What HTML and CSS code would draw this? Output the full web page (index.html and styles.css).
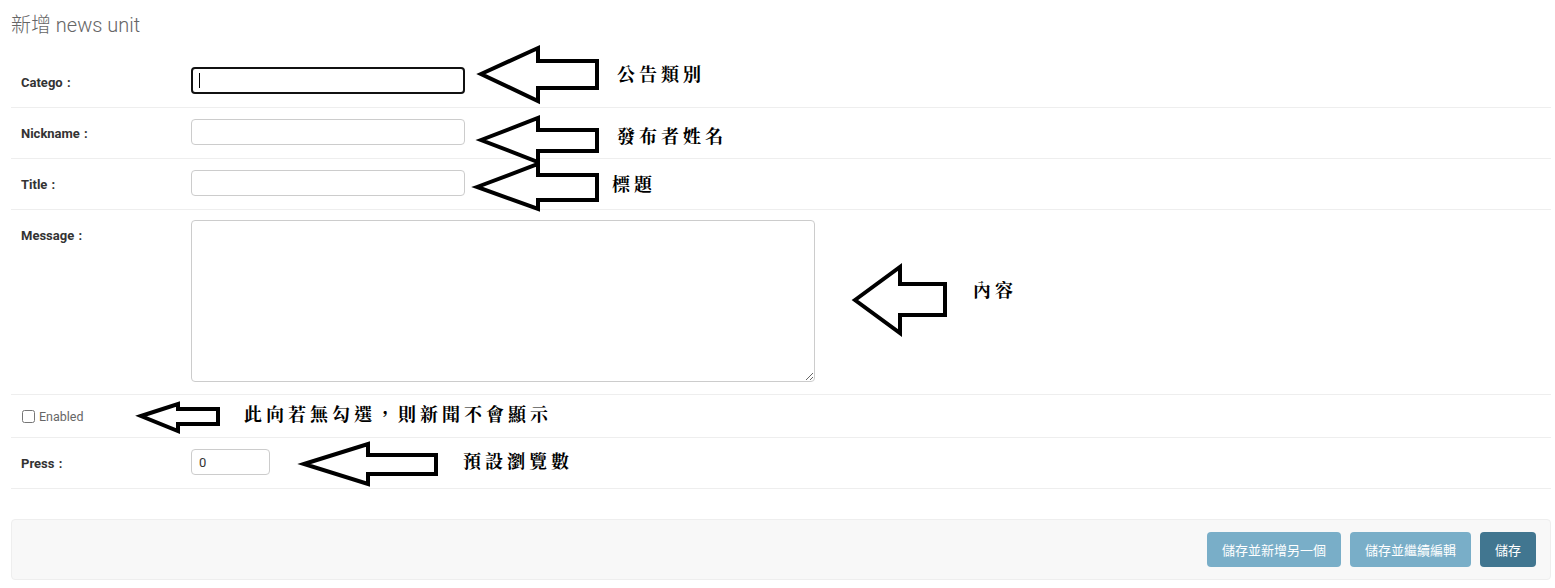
FILE: index.html
```html
<!DOCTYPE html>
<html lang="zh-Hant">
<head>
<meta charset="utf-8">
<title>新增 news unit</title>
<link rel="stylesheet" href="styles.css">
</head>
<body>
<div class="page">
  <h1 class="title">新增 news unit</h1>
  <form class="form">
    <div class="form-row">
      <label class="field-label required">Catego :</label>
      <div class="field"><span class="input-wrap focused"><input class="text-input focused-input" type="text"></span></div>
    </div>
    <div class="form-row">
      <label class="field-label required">Nickname :</label>
      <div class="field"><input class="text-input" type="text"></div>
    </div>
    <div class="form-row">
      <label class="field-label required">Title :</label>
      <div class="field"><input class="text-input" type="text"></div>
    </div>
    <div class="form-row">
      <label class="field-label required">Message :</label>
      <div class="field field-tall"><textarea class="textarea"></textarea></div>
    </div>
    <div class="form-row checkbox-row">
      <input class="checkbox" type="checkbox" id="enabled">
      <label class="checkbox-label" for="enabled">Enabled</label>
    </div>
    <div class="form-row">
      <label class="field-label required">Press :</label>
      <div class="field"><input class="text-input small-input" type="text" value="0"></div>
    </div>
    <div class="submit-row">
      <button type="button" class="btn">儲存並新增另一個</button>
      <button type="button" class="btn">儲存並繼續編輯</button>
      <button type="button" class="btn btn-default">儲存</button>
    </div>
  </form>
</div>

<div class="annotations">
  <svg class="arrows" width="1555" height="588" viewBox="0 0 1555 588" xmlns="http://www.w3.org/2000/svg">
    <g fill="#fff" stroke="#000" stroke-width="4" stroke-linejoin="miter">
      <polygon points="481,74 538,48 538,61 597,61 597,88 538,88 538,101"/>
      <polygon points="481,140 538,118 538,130 597,130 597,151 538,151 538,162"/>
      <polygon points="477,187 538,164 538,175 597,175 597,200 538,200 538,209"/>
      <polygon points="855,300 900,267 900,284 945,284 945,315 900,315 900,333"/>
      <polygon points="141,416 178,404 178,409 218,409 218,424 178,424 178,431"/>
      <polygon points="304,464 368,444 368,455 436,455 436,474 368,474 368,484"/>
    </g>
  </svg>
  <span class="note" style="left:617px;top:63px">公告類別</span>
  <span class="note" style="left:617px;top:125px">發布者姓名</span>
  <span class="note" style="left:612px;top:173px">標題</span>
  <span class="note" style="left:973px;top:279px">內容</span>
  <span class="note" style="left:244px;top:403px">此向若無勾選，則新聞不會顯示</span>
  <span class="note" style="left:463px;top:450px">預設瀏覽數</span>
</div>
</body>
</html>
```

FILE: styles.css
```css
* { box-sizing: border-box; }
html, body {
  margin: 0;
  padding: 0;
  background: #fff;
}
body {
  font-family: Roboto, "Noto Sans CJK TC", "Liberation Sans", sans-serif;
  color: #333;
  width: 1555px;
  height: 588px;
  position: relative;
  overflow: hidden;
}
.page {
  padding: 13px 4px 0 11px;
}
.title {
  margin: 0 0 20px;
  font-size: 20px;
  line-height: 24px;
  font-weight: 300;
  color: #666;
}
.form { margin: 0; }
.form-row {
  display: flex;
  align-items: flex-start;
  padding: 10px;
  border-bottom: 1px solid #eee;
  font-size: 13px;
}
.field-label {
  width: 170px;
  flex-shrink: 0;
  padding: 8px 10px 0 0;
  line-height: 16px;
  font-size: 13px;
  font-weight: 700;
  color: #333;
  word-spacing: 1px;
}
.field {
  height: 30px;
}
.field-tall {
  height: 164px;
}
.text-input {
  display: block;
  margin: 1px 0 0;
  width: 274px;
  height: 26px;
  padding: 5px 6px;
  border: 1px solid #ccc;
  border-radius: 4px;
  font-family: Roboto, "Liberation Sans", sans-serif;
  font-size: 13px;
  color: #333;
  background: #fff;
  outline: none;
}
.input-wrap {
  display: block;
  position: relative;
}
.focused-input {
  margin-top: 0;
  height: 27px;
  border: 2px solid #111;
  border-radius: 4px;
}
.input-wrap.focused::after {
  content: "";
  position: absolute;
  left: 8px;
  top: 6px;
  width: 1px;
  height: 15px;
  background: #000;
}
.small-input {
  width: 79px;
  padding-left: 7px;
}
.textarea {
  display: block;
  width: 624px;
  height: 162px;
  margin: 0;
  border: 1px solid #ccc;
  border-radius: 4px;
  padding: 5px 6px;
  font-family: Roboto, sans-serif;
  font-size: 13px;
  resize: both;
}
.checkbox-row {
  align-items: center;
  height: 43px;
}
.checkbox {
  width: 13px;
  height: 13px;
  margin: 1px 4px 0 1px;
}
.checkbox-label {
  font-size: 12.5px;
  color: #666;
  line-height: 16px;
  padding-top: 1px;
}
.submit-row {
  display: flex;
  justify-content: flex-end;
  gap: 9px;
  margin-top: 30px;
  padding: 12px 14px;
  background: #f8f8f8;
  border: 1px solid #eee;
  border-radius: 4px;
}
.btn {
  height: 35px;
  padding: 10px 15px;
  border: none;
  border-radius: 4px;
  background: #79aec8;
  color: #fff;
  font-family: "Noto Sans CJK TC", Roboto, sans-serif;
  font-size: 13px;
  line-height: 15px;
  cursor: pointer;
}
.btn-default {
  background: #417690;
}
.annotations {
  position: absolute;
  left: 0;
  top: 0;
  width: 1555px;
  height: 588px;
  pointer-events: none;
}
.arrows {
  position: absolute;
  left: 0;
  top: 0;
}
.note {
  position: absolute;
  font-family: "Noto Serif CJK TC", "Noto Sans CJK TC", serif;
  font-weight: 700;
  font-size: 18px;
  line-height: 20px;
  letter-spacing: 4px;
  color: #000;
  white-space: nowrap;
}
```
